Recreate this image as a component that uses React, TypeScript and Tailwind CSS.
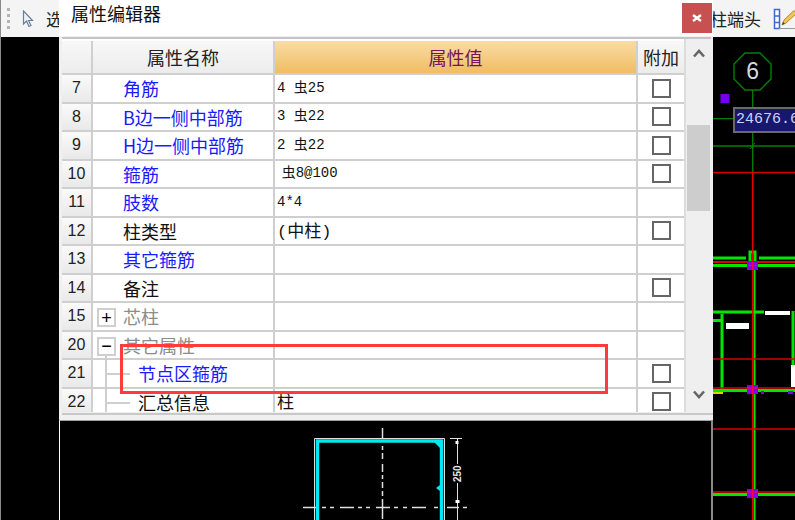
const cjk = "font-['Noto_Sans_CJK_SC','Liberation_Sans',sans-serif]";

type Row = {
  no: number;
  name: string;
  value?: string;
  big?: boolean;
  tone?: "blue" | "black" | "gray";
  check?: boolean;
  box?: "+" | "-";
  tree?: "first" | "mid";
};

const rows: Row[] = [
  { no: 7, name: "角筋", value: "4 虫25", tone: "blue", check: true },
  { no: 8, name: "B边一侧中部筋", value: "3 虫22", tone: "blue", check: true },
  { no: 9, name: "H边一侧中部筋", value: "2 虫22", tone: "blue", check: true },
  { no: 10, name: "箍筋", value: "\u2004虫8@100", tone: "blue", check: true },
  { no: 11, name: "肢数", value: "4*4", tone: "blue" },
  { no: 12, name: "柱类型", value: "(中柱)", big: true, check: true },
  { no: 13, name: "其它箍筋", tone: "blue" },
  { no: 14, name: "备注", check: true },
  { no: 15, name: "芯柱", tone: "gray", box: "+" },
  { no: 20, name: "其它属性", tone: "gray", box: "-" },
  { no: 21, name: "节点区箍筋", tone: "blue", check: true, tree: "first" },
  { no: 22, name: "汇总信息", value: "柱", big: true, check: true, tree: "mid" },
];

function GridRow({ row }: { row: Row }) {
  const color =
    row.tone === "blue" ? "text-[#1a1aff]" : row.tone === "gray" ? "text-[#8c8c8c]" : "text-[#111]";
  return (
    <div className="flex h-[28.5px] shrink-0 border-b-2 border-[#cfcfcf]">
      <div className="flex w-[31px] items-center justify-center border-r-2 border-[#cfcfcf] bg-gradient-to-b from-[#fafafa] to-[#e9e9e9] font-['Liberation_Sans',sans-serif] text-[16px] text-[#222]">
        {row.no}
      </div>
      <div className={`relative flex w-[182px] items-center border-r-2 border-[#cfcfcf] pt-[1px] text-[18px] ${color} ${row.tree ? "pl-[45px]" : "pl-[30px]"}`}>
        {row.box && (
          <span className="absolute left-[4px] top-[5px] flex h-[19px] w-[19px] items-center justify-center border-2 border-[#cfcfcf] bg-white font-['Liberation_Sans',sans-serif] text-[18px] leading-none text-black">
            {row.box === "+" ? "+" : "−"}
          </span>
        )}
        {row.box === "-" && <span className="absolute left-[12px] top-[24px] h-[5px] w-[2px] bg-[#cfcfcf]" />}
        {row.tree && (
          <>
            <span className="absolute left-[12px] top-0 h-full w-[2px] bg-[#cfcfcf]" />
            <span className="absolute left-[13px] top-[13px] h-[2px] w-[24px] bg-[#cfcfcf]" />
          </>
        )}
        {row.name}
      </div>
      <div className={`flex w-[363px] items-center whitespace-pre border-r-2 border-[#cfcfcf] pl-[2px] font-['Liberation_Mono','Noto_Sans_CJK_SC',monospace] text-[#111] ${row.big ? "pt-[3px] text-[17px]" : "text-[14px]"}`}>
        {row.value}
      </div>
      <div className="flex w-[46px] items-center justify-center">
        {row.check && <span className="h-[19px] w-[19px] border-2 border-[#666] bg-white" />}
      </div>
    </div>
  );
}

function Grid() {
  return (
    <div className="flex h-[375px] w-[649px] border-t-2 border-[#c4c4c4] bg-white">
      <div className="flex w-[622px] flex-col overflow-hidden pt-[2px]">
        <div className="flex h-[34px] shrink-0 border-b-2 border-[#cfcfcf] text-[18px] text-[#222]">
          <div className="w-[31px] border-r-2 border-[#cfcfcf] bg-gradient-to-b from-[#f8f8f8] to-[#ececec]" />
          <div className="flex w-[182px] items-center justify-center border-r-2 border-[#cfcfcf] bg-gradient-to-b from-[#f8f8f8] to-[#ececec]">
            属性名称
          </div>
          <div className="flex w-[363px] items-center justify-center border-r-2 border-[#cfcfcf] bg-gradient-to-b from-[#f9dca3] to-[#f0bd62] text-[#74125e]">
            属性值
          </div>
          <div className="flex w-[46px] items-center justify-center bg-gradient-to-b from-[#f8f8f8] to-[#ececec]">附加</div>
        </div>
        {rows.map((r) => (
          <GridRow key={r.no} row={r} />
        ))}
      </div>
      <Scrollbar />
    </div>
  );
}

function Scrollbar() {
  return (
    <div className="flex w-[27px] flex-col items-center border-l-2 border-[#dcdcdc] bg-[#efefef] pt-[10px]">
      <svg width="12" height="9" viewBox="0 0 12 9" fill="none" stroke="#666" strokeWidth="2.6">
        <path d="M1 7.5 6 2l5 5.5" />
      </svg>
      <div className="mt-[67px] h-[86px] w-[23px] bg-[#cdcdcd]" />
      <svg className="mt-[179px]" width="12" height="9" viewBox="0 0 12 9" fill="none" stroke="#666" strokeWidth="2.6">
        <path d="M1 1.5 6 7l5-5.5" />
      </svg>
    </div>
  );
}

function SectionPreview() {
  return (
    <svg width="651" height="99" viewBox="60 421 651 99" className="block bg-black">
      <g stroke="#e0e0e0" strokeWidth="1" fill="none">
        <path d="M314.500 520V438.500H444.500V520" />
        <path d="M382.500 428v11M382.500 446v4M382.500 453v6M382.500 464v8M382.500 475v4M382.500 482v6M382.500 491v5M382.500 499v20" strokeWidth="1.500" />
        <path d="M303 507.500h13M322 507.500h4M330 507.500h4M340 507.500h14M358 507.500h4M366 507.500h4M376 507.500h14M394 507.500h4M403 507.500h4M412 507.500h14M434 507.500h4M447 507.500h12M463 507.500h4" strokeWidth="1.500" />
        <path d="M450 438.500h12M457.500 438v26M457.500 483v37" />
      </g>
      <path d="M317.500 520V441H441.500V520" stroke="#00e8f0" strokeWidth="3.500" fill="none" />
      <path d="M433 441h7v7z" fill="#00e8f0" />
      <path d="M436 488l4-3v6z" fill="#00e8f0" />
      <rect x="455.500" y="441" width="3" height="3" fill="#fff" />
      <rect x="455.500" y="500" width="4" height="3" fill="#fff" />
      <text x="0" y="0" transform="translate(461 482) rotate(-90)" fill="#e6e6e6" fontSize="10" fontFamily="Liberation Sans" fontWeight="700">
        250
      </text>
    </svg>
  );
}

function CadView() {
  return (
    <svg width="82" height="483" viewBox="713 37 82 483" className="block">
      <polygon points="745,53 760,53 771,64 771,79 760,90 745,90 734,79 734,64" fill="none" stroke="#008000" strokeWidth="1.400" />
      <text x="752.700" y="79" textAnchor="middle" fill="#d8d8d8" fontSize="23" fontFamily="Liberation Sans">
        6
      </text>
      <path d="M752.700 90V172M713 118.700h20M713 146h82" stroke="#008000" strokeWidth="1.300" />
      <rect x="720.500" y="94" width="9" height="9" fill="#7000ee" />
      <path d="M750 149l5-6" stroke="#008000" />

      <path d="M713 258h33M759 258h36M713 265.500h82M750 252h5v10h-5z" stroke="#00e600" strokeWidth="3" fill="none" />
      <path d="M713 262h82" stroke="#e00000" strokeWidth="2" />
      <path d="M754.500 266V520" stroke="#00e600" strokeWidth="2" />
      <path d="M713 312h51M722 314V389M713 320.500h8M793 311V365M713 390.500h82M713 494.500h82" stroke="#00e600" strokeWidth="3" fill="none" />
      <path d="M713 388h82M713 492h82" stroke="#e00000" strokeWidth="1.600" />
      <rect x="765" y="311" width="25" height="4" fill="#fff" />
      <rect x="726" y="323" width="23" height="6" fill="#fff" />
      <rect x="791" y="365" width="4" height="22" fill="#fff" />
      <path d="M713 172.500h82M713 359h82M713 429h82" stroke="#d40000" strokeWidth="1.600" />
      <path d="M752.700 172V520" stroke="#e00000" strokeWidth="1.600" />
      <rect x="747" y="261" width="11" height="9" fill="#8a00e6" />
      <rect x="747" y="385" width="11" height="9" fill="#8a00e6" />
      <rect x="747" y="489" width="11" height="9" fill="#8a00e6" />
      <rect x="761" y="391" width="3" height="3" fill="#8a00e6" />
      <rect x="788" y="391" width="5" height="3" fill="#8a00e6" />
      <rect x="713" y="392" width="10" height="2" fill="#d8d800" />
      <path d="M752.700 262v8M747 265.500h11M752.700 385v9M747 388h11M752.700 489v9M747 492h11" stroke="#ff0040" strokeWidth="1.200" />
    </svg>
  );
}

function CursorIcon() {
  return (
    <svg width="12" height="18" viewBox="0 0 12 18">
      <path d="M1.500 1v13l3-3 2.500 5.500 2-1-2.500-5h4z" fill="#eef2f8" stroke="#6d7f9e" strokeWidth="1.200" />
    </svg>
  );
}

function PencilIcon() {
  return (
    <svg width="22" height="22" viewBox="0 0 22 22">
      <path d="M1.500 1.500h5v19h-5zM1.500 8h5M1.500 14.500h5" fill="#fff" stroke="#3f68c8" strokeWidth="1.500" />
      <path d="M6 20.500h16" stroke="#9a9a9a" />
      <path d="M9 17l2-5L21 2.500l2.500 3L13 15z" fill="#f3c552" stroke="#a0762a" strokeWidth="0.800" />
      <path d="M9 17l1-3 2 1.500z" fill="#444" />
    </svg>
  );
}

export default function App() {
  return (
    <div className={`relative flex h-[520px] w-[795px] overflow-hidden bg-black ${cjk}`}>
      <div className="flex w-[59px] shrink-0 flex-col border-l border-[#8a8a8a]">
        <div className="flex h-[37px] items-center overflow-hidden bg-[#f4f4f4]">
          <div className="ml-[6px] flex flex-col gap-[3px]">
            {[0, 1, 2, 3].map((i) => (
              <span key={i} className="h-[3px] w-[3px] bg-[#b4b4b4]" />
            ))}
          </div>
          <span className="ml-[12px] flex">
            <CursorIcon />
          </span>
          <span className="ml-[12px] whitespace-nowrap text-[17px] text-[#222]">选</span>
        </div>
      </div>

      <div className="flex w-[654px] shrink-0 flex-col bg-[#f0f0f0]">
        <div className="flex h-[37px] items-start justify-between bg-white pr-[1px] pt-[3px]">
          <span className="pl-[12px] text-[18px] leading-[20px] text-[#111]">属性编辑器</span>
          <button type="button" className="flex h-[30px] w-[30px] items-center justify-center bg-[#c75050]">
            <svg width="10" height="10" viewBox="0 0 10 10" stroke="#fff" strokeWidth="2.400">
              <path d="M1 2l8 6M9 2L1 8" />
            </svg>
          </button>
        </div>
        <div className="flex flex-1 flex-col pl-[3px] pt-[1px]">
          <Grid />
          <div className="mt-[1px] h-[7px] border-t-2 border-[#c8c8c8]" />
        </div>
        <div className="border-l border-t border-r-2 border-l-white border-t-[#a0a0a0] border-r-[#8a8a8a]">
          <SectionPreview />
        </div>
      </div>

      <div className="flex min-w-0 flex-1 flex-col">
        <div className="flex h-[37px] items-center justify-between overflow-hidden bg-[#f4f4f4]">
          <span className="ml-[-3px] whitespace-nowrap text-[17px] text-[#222]">柱端头</span>
          <span className="flex">
            <PencilIcon />
          </span>
        </div>
        <CadView />
      </div>

      <div className="absolute left-[733px] top-[107px] h-[26px] w-[70px] overflow-hidden border-2 border-[#6a6a6a] bg-[#17176b] pl-[1px] font-['Liberation_Mono',monospace] text-[15px] leading-[22px] text-[#cfd3ff]">
        24676.6
      </div>
      <div className="absolute left-[120px] top-[344px] h-[50px] w-[488px] border-[3px] border-[#ff3b3b]" />
    </div>
  );
}
